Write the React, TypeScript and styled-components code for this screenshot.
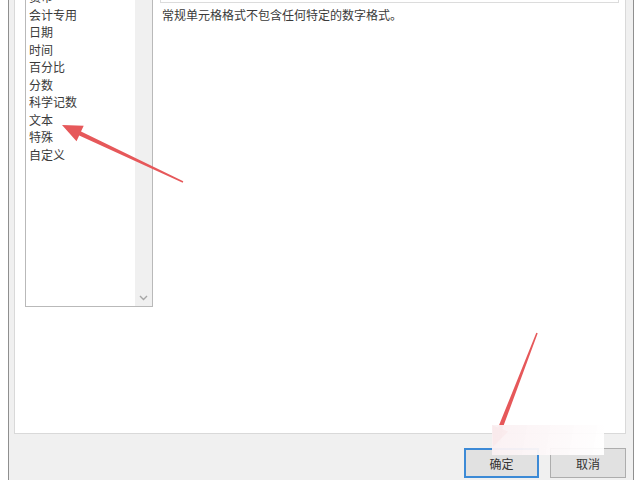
import React from 'react';
import styled, { createGlobalStyle } from 'styled-components';

const GlobalStyle = createGlobalStyle`
    html, body {
        margin: 0;
        background: #ffffff;
        overflow: hidden;
        font-family: "Noto Sans CJK SC", "Noto Sans", sans-serif;
    }
`

const Screen = styled.div`
    position: relative;
    width: 640px;
    height: 480px;
    overflow: hidden;
`

const Window = styled.div`
    margin: -20px 0 0 8px;
    width: 626px;
    box-sizing: border-box;
    border-left: 1px solid #8f8f8f;
    border-right: 1px solid #8f8f8f;
    background: #f0f0f0;
    padding: 0 7px 20px 5px;
`

const TabPanel = styled.div`
    height: 454px;
    box-sizing: border-box;
    background: #ffffff;
    border: 1px solid #d9d9d9;
    border-top: none;
    padding: 7px 6px 0 10px;
    display: grid;
    grid-template-columns: 128px 1fr;
    column-gap: 7px;
    align-items: start;
`

const CategoryList = styled.div`
    height: 320px;
    box-sizing: border-box;
    border: 1px solid #b9b9b9;
    display: flex;
    background: #ffffff;
`

const Items = styled.ul`
    flex: 1;
    list-style: none;
    margin: 0;
    padding: 0 0 0 3px;
`

const Item = styled.li`
    height: 17.5px;
    line-height: 17.5px;
    font-size: 12px;
    color: #3a3a3a;
    white-space: nowrap;
`

const ScrollTrack = styled.div`
    width: 17px;
    background: #f0f0f0;
    display: flex;
    flex-direction: column;
    justify-content: flex-end;
    align-items: center;
`

const ScrollArrow = styled.div`
    height: 17px;
    display: flex;
    align-items: center;
    justify-content: center;
`

const Detail = styled.div`
    display: flex;
    flex-direction: column;
`

const SampleBox = styled.div`
    height: 16px;
    box-sizing: border-box;
    border: 1px solid #dcdcdc;
    border-top: none;
`

const Description = styled.p`
    margin: 4px 0 0 2px;
    font-size: 12px;
    line-height: 16px;
    color: #3a3a3a;
`

const Footer = styled.div`
    display: flex;
    justify-content: flex-end;
    gap: 11px;
    padding-top: 14px;
`

const DialogButton = styled.button<{ $primary?: boolean; $width: number }>`
    width: ${p => p.$width}px;
    height: 30px;
    box-sizing: border-box;
    background: #e1e1e1;
    border: ${p => (p.$primary ? '2px solid #3c8ad6' : '1px solid #adadad')};
    font-family: inherit;
    font-size: 12px;
    color: #333333;
    padding: 0;
`

const Annotations = styled.svg`
    position: absolute;
    left: 0;
    top: 0;
    pointer-events: none;
`

const Watermark = styled.div`
    position: absolute;
    left: 492px;
    top: 425px;
    width: 112px;
    height: 30px;
    background: linear-gradient(100deg, rgba(250, 240, 242, 0.96), rgba(255, 255, 255, 0.94));
    filter: blur(0.6px);
`

const categories = ['货币', '会计专用', '日期', '时间', '百分比', '分数', '科学记数', '文本', '特殊', '自定义']

export default function App() {
    return (
        <>
            <GlobalStyle />
            <Screen>
                <Window>
                    <TabPanel>
                        <CategoryList>
                            <Items>
                                {categories.map(c => <Item key={c}>{c}</Item>)}
                            </Items>
                            <ScrollTrack>
                                <ScrollArrow>
                                    <svg width="9" height="6" viewBox="0 0 9 6">
                                        <path d="M1 1 L4.5 4.5 L8 1" fill="none" stroke="#a6a6a6" strokeWidth="1.4" />
                                    </svg>
                                </ScrollArrow>
                            </ScrollTrack>
                        </CategoryList>
                        <Detail>
                            <SampleBox />
                            <Description>常规单元格格式不包含任何特定的数字格式。</Description>
                        </Detail>
                    </TabPanel>
                    <Footer>
                        <DialogButton $primary $width={75}>确定</DialogButton>
                        <DialogButton $width={76}>取消</DialogButton>
                    </Footer>
                </Window>
                {/* red pointer arrows drawn on top */}
                <Annotations width="640" height="480" viewBox="0 0 640 480">
                    <polygon
                        points="183.3,181.3 81,131.5 83.7,125.8 62,125 76.5,141.2 79.2,135.5 182.7,182.7"
                        fill="#e6585a"
                    />
                    <polygon
                        points="537.7,333.3 502.3,429.1 508.1,431.4 493,447 492.3,425.2 498.1,427.5 536.3,332.7"
                        fill="#e6585a"
                    />
                </Annotations>
                <Watermark />
            </Screen>
        </>
    )
}
